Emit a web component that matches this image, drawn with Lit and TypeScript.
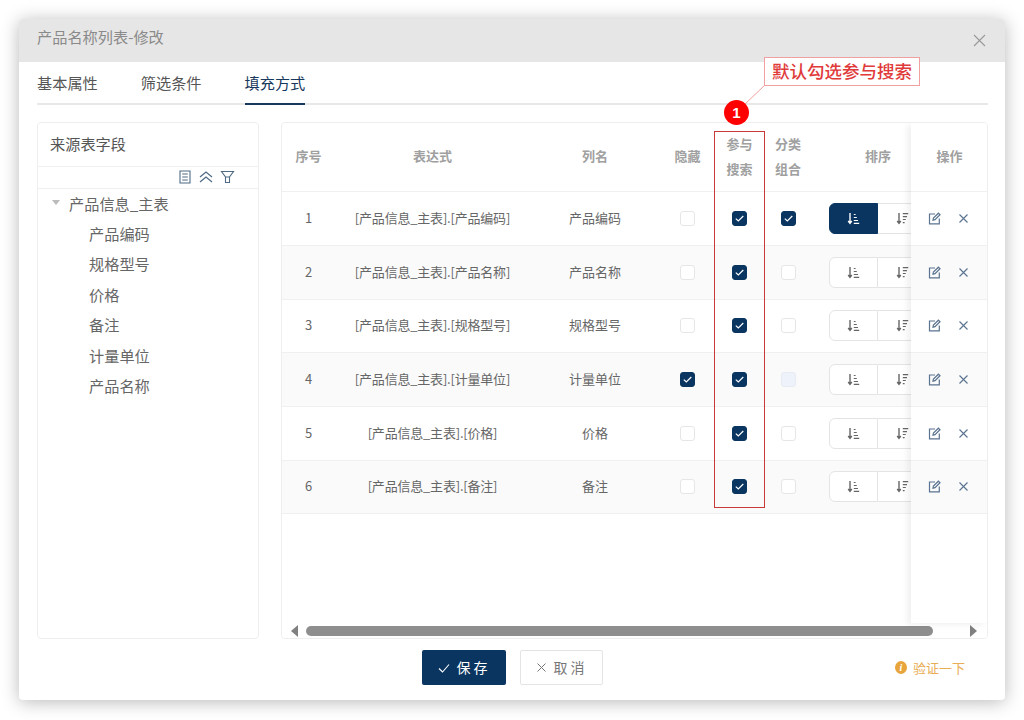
import { LitElement, html, css, svg } from "lit";
import { customElement } from "lit/decorators.js";

const rows = [
  { n: 1, expr: "[产品信息_主表].[产品编码]", name: "产品编码", hide: 0, group: 1, active: true },
  { n: 2, expr: "[产品信息_主表].[产品名称]", name: "产品名称", hide: 0, group: 0 },
  { n: 3, expr: "[产品信息_主表].[规格型号]", name: "规格型号", hide: 0, group: 0 },
  { n: 4, expr: "[产品信息_主表].[计量单位]", name: "计量单位", hide: 1, group: 2 },
  { n: 5, expr: "[产品信息_主表].[价格]", name: "价格", hide: 0, group: 0 },
  { n: 6, expr: "[产品信息_主表].[备注]", name: "备注", hide: 0, group: 0 },
];
const fields = ["产品编码", "规格型号", "价格", "备注", "计量单位", "产品名称"];

const asc = svg`<svg width="13" height="13" viewBox="0 0 13 13" fill="none" stroke="currentColor" stroke-width="1.1"><path d="M3 1v10M1.2 9 3 11.4 4.8 9" stroke-width="1.4"/><path d="M6.8 2.5h1.8M6.8 5.5h3M6.8 8.5h4.2M6.8 11.4h5.4" stroke-width="1.2"/></svg>`;
const desc = svg`<svg width="13" height="13" viewBox="0 0 13 13" fill="none" stroke="currentColor" stroke-width="1.1"><path d="M3 1v10M1.2 9 3 11.4 4.8 9" stroke-width="1.4"/><path d="M6.8 1.6h5.4M6.8 4.6h4.2M6.8 7.5h3M6.8 10.6h1.8" stroke-width="1.2"/></svg>`;
const edit = svg`<svg width="13" height="13" viewBox="0 0 13 13" fill="none" stroke="currentColor" stroke-width="1.2"><path d="M7 2H1.5v9.8h9.8V6.5"/><path d="M5 8.2 5.4 6l5-4.8 1.6 1.6-5 4.8z"/></svg>`;
const cross = svg`<svg width="11" height="11" viewBox="0 0 11 11" fill="none" stroke="currentColor" stroke-width="1.1"><path d="M1.5 1.5l8 8M9.5 1.5l-8 8"/></svg>`;

@customElement("app-root")
export class AppRoot extends LitElement {
  static styles = css`
    :host { display: block; position: relative; width: 1024px; height: 720px; padding: 19px 19px 20px; box-sizing: border-box; background: #fff; font-family: "Noto Sans CJK SC", "Liberation Sans", sans-serif; color: #555; overflow: hidden; }
    * { box-sizing: border-box; }
    .dialog { height: 681px; background: #fff; border-radius: 4px; box-shadow: 0 2px 18px rgba(0,0,0,.28); display: flex; flex-direction: column; overflow: hidden; }
    .head { height: 43px; flex: none; background: #e6e6e6; display: flex; align-items: center; justify-content: space-between; padding: 0 19px 0 18px; font-size: 15.2px; color: #8a8a8a; }
    .title { margin-bottom: 9px; }
    .close { display: flex; color: #999; }
    .body { flex: 1; padding: 0 17px 0 18px; display: flex; flex-direction: column; min-height: 0; }
    .tabs { height: 43px; flex: none; display: flex; gap: 43px; border-bottom: 2px solid #e8e8e8; font-size: 15.2px; color: #555; }
    .tab { height: 43px; line-height: 41px; padding: 0; }
    .tab.on { color: #17385c; border-bottom: 2px solid #17385c; }
    .panes { height: 517px; margin-top: 17px; display: flex; gap: 22px; flex: none; }
    .left { width: 222px; flex: none; border: 1px solid #eee; border-radius: 4px; display: flex; flex-direction: column; }
    .left-title { height: 44px; flex: none; padding: 0 0 4px 12px; display: flex; align-items: center; font-size: 15.2px; color: #555; border-bottom: 1px solid #f0f0f0; }
    .tools { height: 22px; flex: none; border-bottom: 1px solid #f0f0f0; display: flex; align-items: center; justify-content: flex-end; gap: 6px; padding: 0 23px 1px 0; color: #4f6a84; }
    .tools svg { display: block; }
    .tree { margin-top: -1.5px; font-size: 15.2px; color: #666; }
    .node { height: 30.4px; display: flex; align-items: center; padding-left: 51px; }
    .node.root { padding-left: 14px; gap: 8px; }
    .caret { width: 0; height: 0; border: 4px solid transparent; border-top: 5px solid #bbb; border-bottom: 0; margin-right: 1px; }
    .right { flex: 1; min-width: 0; position: relative; border: 1px solid #eee; border-radius: 4px; overflow: hidden; display: flex; flex-direction: column; }
    .table { flex: 1; min-height: 0; font-size: 13px; color: #666; }
    .tr { display: grid; grid-template-columns: 53px 195px 130px 55px 49px 48px 132px; width: 662px; }
    .thead { height: 69.2px; font-weight: 700; color: #a0a0a0; line-height: 25px; border-bottom: 1px solid #f0f0f0; }
    .row { height: 53.7px; border-bottom: 1px solid #f0f0f0; }
    .row.alt { background: #fafafa; }
    .c { display: flex; align-items: center; justify-content: center; text-align: center; white-space: nowrap; }
    .h { padding-bottom: 4px; }
    .two { padding-bottom: 2px; }
    .t { padding-bottom: 2px; }
    .expr { letter-spacing: -0.2px; }
    .cb { width: 15px; height: 15px; border-radius: 3px; border: 1px solid #e6e6e6; background: #fff; display: flex; align-items: center; justify-content: center; }
    .cb.on { background: #0a3560; border-color: #0a3560; }
    .cb.dis { background: #eef2fb; border-color: #e8ebf2; }
    .sort { display: flex; height: 31px; width: 98px; color: #666; }
    .sbtn { width: 49px; height: 31px; border: 1px solid #e4e4e4; background: #fff; display: flex; align-items: center; justify-content: center; }
    .sbtn:first-child { border-radius: 6px 0 0 6px; }
    .sbtn:last-child { border-left: 0; }
    .sbtn.on { background: #0a3560; border-color: #0a3560; color: #fff; }
    .fixed { position: absolute; left: 629px; top: 0; width: 77px; height: 500px; background: #fff; box-shadow: -4px 2px 6px rgba(0,0,0,.06); font-size: 13px; }
    .fhead { height: 69.2px; font-weight: 700; color: #a0a0a0; border-bottom: 1px solid #f0f0f0; }
    .frow { height: 53.7px; border-bottom: 1px solid #f0f0f0; display: flex; align-items: center; gap: 17px; padding-left: 17px; color: #5a7390; }
    .frow.alt { background: #fafafa; }
    .frow svg { display: block; }
    .scroll { height: 15px; flex: none; display: flex; align-items: center; padding: 0 9px 0 9px; background: #fff; }
    .thumb { height: 10px; border-radius: 5px; background: #8e8e8e; width: 627px; margin: 0 37px 0 8px; }
    .arr { width: 0; height: 0; border: 6px solid transparent; flex: none; }
    .arr.l { border-right: 7px solid #808080; border-left: 0; }
    .arr.r { border-left: 7px solid #808080; border-right: 0; }
    .foot { flex: 1; display: grid; grid-template-columns: 1fr auto 1fr; align-items: center; padding: 0 0 4px 0; }
    .btns { display: flex; gap: 14px; grid-column: 2; }
    .btn { height: 35px; border-radius: 2px; display: flex; align-items: center; justify-content: center; font-size: 14px; letter-spacing: 3px; }
    .btn span { margin-bottom: 2px; }
    .btn.save { width: 84px; background: #0a3560; color: #fff; gap: 7px; }
    .btn.cancel { width: 83px; background: #fff; color: #777; border: 1px solid #e4e4e4; gap: 7px; }
    .verify { justify-self: end; display: flex; align-items: center; gap: 6px; font-size: 13px; color: #e8ad55; margin-right: 23px; }
    .info { width: 12px; height: 13px; border-radius: 50%; background: #e8a53c; color: #fff; font: italic 700 10px/13px "Liberation Serif", serif; text-align: center; }
    .note { position: absolute; left: 764px; top: 57px; width: 156px; height: 29px; border: 1px solid #f0a0a0; background: #fff; color: #e03a3a; font-size: 17.5px; font-weight: 500; line-height: 26px; text-align: center; white-space: nowrap; }
    .lead { position: absolute; left: 740px; top: 84px; }
    .badge { position: absolute; left: 724px; top: 100px; width: 25px; height: 25px; border-radius: 50%; background: #f00; color: #fff; font: 700 15px/25px "Liberation Sans", sans-serif; text-align: center; }
    .mark { position: absolute; left: 714px; top: 131px; width: 51px; height: 377px; border: 1.5px solid #c8393b; }
  `;

  private box(state: number) {
    if (state === 1) {
      return html`<span class="cb on"><svg width="11" height="11" viewBox="0 0 11 11" fill="none" stroke="#fff" stroke-width="1.2"><path d="M1.8 5.6 4.3 8l5-5"/></svg></span>`;
    }
    return html`<span class="cb ${state === 2 ? "dis" : ""}"></span>`;
  }

  render() {
    return html`
      <div class="dialog">
        <div class="head"><span class="title">产品名称列表-修改</span><span class="close"><svg width="13" height="13" viewBox="0 0 13 13" fill="none" stroke="currentColor" stroke-width="1.1"><path d="M1 1l11 11M12 1 1 12"/></svg></span></div>
        <div class="body">
          <div class="tabs"><div class="tab">基本属性</div><div class="tab">筛选条件</div><div class="tab on">填充方式</div></div>
          <div class="panes">
            <div class="left">
              <div class="left-title">来源表字段</div>
              <div class="tools">
                <svg width="14" height="14" viewBox="0 0 14 14" fill="none" stroke="currentColor" stroke-width="1.1"><path d="M2 1h10v12H2zM4.2 4h5.6M4.2 7h5.6M4.2 10h5.6"/></svg>
                <svg width="16" height="14" viewBox="0 0 16 14" fill="none" stroke="currentColor" stroke-width="1.2"><path d="M2 7l6-5 6 5M2 12l6-5 6 5"/></svg>
                <svg width="15" height="14" viewBox="0 0 15 14" fill="none" stroke="currentColor" stroke-width="1.1"><path d="M1.5 1.5h12L9.5 7v5.5h-4V7zM5.5 7h4"/></svg>
              </div>
              <div class="tree">
                <div class="node root"><span class="caret"></span><span>产品信息_主表</span></div>
                ${fields.map((f) => html`<div class="node">${f}</div>`)}
              </div>
            </div>
            <div class="right">
              <div class="table">
                <div class="tr thead">
                  <div class="c h">序号</div><div class="c h">表达式</div><div class="c h">列名</div><div class="c h">隐藏</div>
                  <div class="c two">参与<br />搜索</div><div class="c two">分类<br />组合</div><div class="c h">排序</div>
                </div>
                ${rows.map((r, i) => html`
                  <div class="tr row ${i % 2 ? "alt" : ""}">
                    <div class="c t">${r.n}</div><div class="c t expr">${r.expr}</div><div class="c t">${r.name}</div>
                    <div class="c">${this.box(r.hide)}</div><div class="c">${this.box(1)}</div><div class="c">${this.box(r.group)}</div>
                    <div class="c"><div class="sort"><span class="sbtn ${r.active ? "on" : ""}">${asc}</span><span class="sbtn">${desc}</span></div></div>
                  </div>`)}
              </div>
              <div class="fixed">
                <div class="fhead c h">操作</div>
                ${rows.map((_, i) => html`<div class="frow ${i % 2 ? "alt" : ""}">${edit}${cross}</div>`)}
              </div>
              <div class="scroll"><span class="arr l"></span><span class="thumb"></span><span class="arr r"></span></div>
            </div>
          </div>
          <div class="foot">
            <div class="btns">
              <div class="btn save"><svg width="12" height="12" viewBox="0 0 12 12" fill="none" stroke="currentColor" stroke-width="1.1"><path d="M1 6.5 4.5 10 11 2.5"/></svg><span>保存</span></div>
              <div class="btn cancel"><svg width="11" height="11" viewBox="0 0 11 11" fill="none" stroke="currentColor" stroke-width="1"><path d="M1.5 1.5l8 8M9.5 1.5l-8 8"/></svg><span>取消</span></div>
            </div>
            <div class="verify"><span class="info">i</span><span>验证一下</span></div>
          </div>
        </div>
      </div>
      <svg class="lead" width="26" height="22" viewBox="0 0 26 22" fill="none" stroke="#f0a0a0"><path d="M25 1 4 21"/></svg>
      <div class="note">默认勾选参与搜索</div>
      <div class="badge">1</div>
      <div class="mark"></div>
    `;
  }
}
